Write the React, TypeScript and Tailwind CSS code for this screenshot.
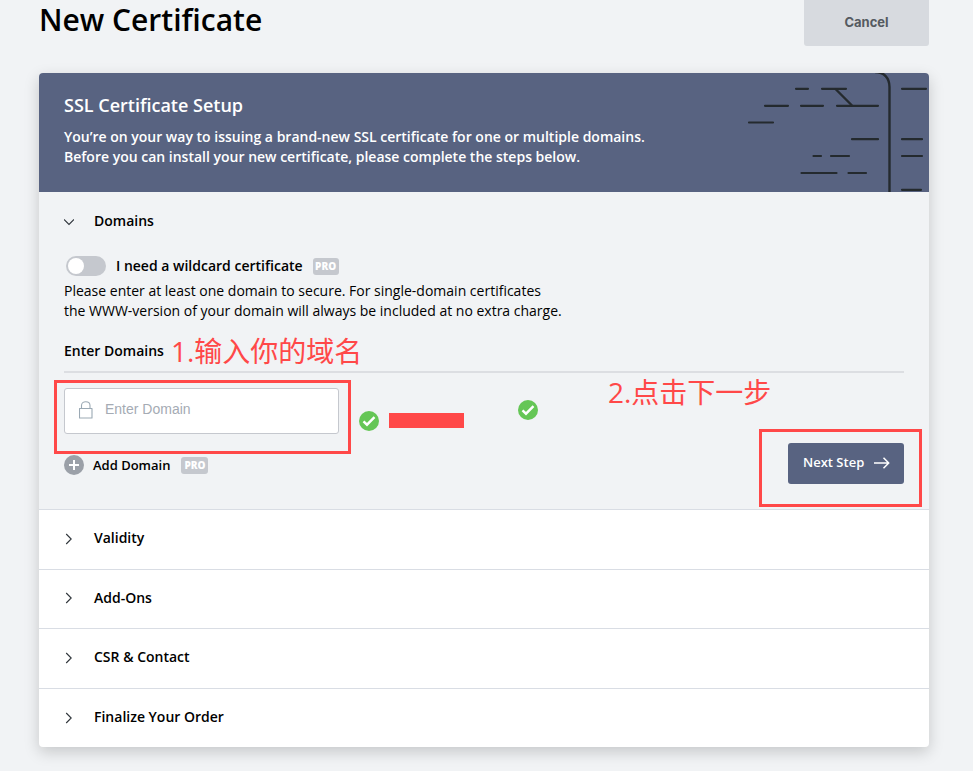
import type { ReactNode } from "react";

const steps = ["Validity", "Add-Ons", "CSR & Contact", "Finalize Your Order"];

function ProBadge({ className = "" }: { className?: string }) {
  return (
    <span className={`flex h-[17px] items-center justify-center rounded-[3px] bg-[#c5c8ce] text-[10px] font-extrabold leading-none text-white ${className}`}>
      PRO
    </span>
  );
}

function Check({ className }: { className: string }) {
  return (
    <svg className={`absolute size-5 ${className}`} viewBox="0 0 20 20" fill="none">
      <circle cx="10" cy="10" r="10" fill="#65c656" />
      <path d="M4.500 10.300 8 13.700 15.500 6.200" stroke="#fff" strokeWidth="2.400" />
    </svg>
  );
}

function Annotation({ className, children }: { className: string; children: ReactNode }) {
  return (
    <span className={`absolute whitespace-nowrap font-['Open_Sans','Noto_Sans_CJK_SC',sans-serif] text-[28px] font-normal leading-8 text-[#ff4848] ${className}`}>
      {children}
    </span>
  );
}

function BannerArt() {
  return (
    <svg className="h-[119px] w-[190px]" viewBox="739 73 190 119" fill="none" stroke="#242a2e" strokeWidth="2.200">
      <path
        strokeLinecap="round"
        d="M796 88.800h12M822 88.800h24M902 88.800h24M765 105.800h23M801 105.800h22M837 105.800h41M749 122.500h24M852 139.200h26M902 139.200h20M813.500 156h7.500M831 156h18M902 156h20M801.500 173h35M848.500 173h17.500M902 189.800h19"
      />
      <path d="M835.500 89 852 105.500M875 72C884 72 889.500 78 889.500 87V192" strokeWidth="2.400" />
    </svg>
  );
}

export default function App() {
  return (
    <div className="relative h-[771px] w-[973px] overflow-hidden bg-[#f1f3f5] px-[39px] font-['Open_Sans',sans-serif] text-black">
      <header className="flex h-[73px] w-[890px] items-start justify-between">
        <h1 className="whitespace-nowrap text-[30px] font-semibold leading-[39px]">New Certificate</h1>
        <button className="h-[46px] w-[125px] rounded-b-[3px] bg-[#d7dadf] font-['Inter',sans-serif] text-[13px] font-bold text-[#555a61]">
          Cancel
        </button>
      </header>

      <main className="h-[674px] w-[890px] overflow-hidden rounded bg-white shadow-[0_5px_15px_rgba(0,0,0,0.18)]">
        <section className="flex h-[119px] justify-between bg-[#586381] pl-[25px] text-white">
          <div className="whitespace-nowrap pt-5">
            <h2 className="text-[18px] font-semibold leading-6">SSL Certificate Setup</h2>
            <p className="mt-[10px] text-[14px] font-semibold leading-5">
              You’re on your way to issuing a brand-new SSL certificate for one or multiple domains.
              <br />
              Before you can install your new certificate, please complete the steps below.
            </p>
          </div>
          <BannerArt />
        </section>

        <section className="h-[318px] border-b border-[#d9dde4] bg-[#f1f3f5] px-[25px] pt-[19px]">
          <div className="flex h-5 items-center">
            <svg className="mt-[2px] h-3 w-[10px]" viewBox="0 0 10 12" fill="none" stroke="#30363c" strokeWidth="1.100">
              <path d="m0 3.500 5 5 5-5" />
            </svg>
            <h3 className="ml-5 text-[14px] font-semibold leading-5">Domains</h3>
          </div>

          <div className="mt-[25px] flex h-5 items-center whitespace-nowrap">
            <span className="ml-[2px] flex h-5 w-10 items-center rounded-full bg-[#c5c8ce] pl-[2px]">
              <span className="size-4 rounded-full bg-white" />
            </span>
            <span className="ml-[10px] text-[14px] font-semibold leading-5">I need a wildcard certificate</span>
            <ProBadge className="ml-[10px] w-[26px]" />
          </div>
          <p className="mt-[5px] whitespace-nowrap text-[14px] leading-5">
            Please enter at least one domain to secure. For single-domain certificates
            <br />
            the WWW-version of your domain will always be included at no extra charge.
          </p>

          <div className="mt-5 h-8 border-b-2 border-[#dcdee2]">
            <h3 className="text-[14px] font-semibold leading-5">Enter Domains</h3>
          </div>

          <div className="mt-[15px] flex justify-between">
            <div>
              <div className="flex h-[46px] w-[275px] items-center rounded-[3px] border border-[#c5c8ce] bg-white">
                <svg className="ml-[14px] mt-[-3px] h-[18px] w-[14px]" viewBox="0 0 14 18" fill="none" stroke="#9ba9b4" strokeLinejoin="round">
                  <path d="M.5 7.500h12.500v9.500H.5zM2.500 7.500V4.500C2.500-.5 11-.5 11 4.500v3" strokeWidth="1.100" />
                </svg>
                <span className="ml-3 mt-[-3px] font-['Liberation_Sans',sans-serif] text-[14px] text-[#a5abb4]">Enter Domain</span>
              </div>
              <div className="mt-[21px] flex h-5 items-center whitespace-nowrap">
                <svg className="size-5" viewBox="0 0 20 20" fill="none">
                  <circle cx="10" cy="10" r="10" fill="#9ba0a8" />
                  <path d="M10 5v10M5 10h10" stroke="#fff" strokeWidth="2" />
                </svg>
                <span className="ml-[9px] pt-[2px] text-[13px] font-semibold">Add Domain</span>
                <ProBadge className="ml-[11px] w-[27px]" />
              </div>
            </div>
            <button className="mt-[55px] flex h-[41px] w-[116px] items-center whitespace-nowrap rounded-[3px] bg-[#586381] pl-[15px] text-[13px] font-semibold text-white">
              <span className="mt-[-2px]">Next Step</span>
              <svg className="ml-[10px] mt-[-2px] h-3 w-4" viewBox="0 0 16 12" fill="none" stroke="white" strokeWidth="1.500">
                <path d="M0 6h15M9.500.8l5.200 5.200-5.200 5.200" />
              </svg>
            </button>
          </div>
        </section>

        {steps.map((step) => (
          <div key={step} className="flex h-[59.500px] items-center border-b border-[#d9dde4] pb-[3px] pl-[25px] last:border-b-0">
            <svg className="mt-[2px] h-3 w-[10px]" viewBox="0 0 10 12" fill="none" stroke="#30363c" strokeWidth="1.100">
              <path d="m2.200 1 5 5-5 5" />
            </svg>
            <span className="ml-5 whitespace-nowrap text-[14px] font-semibold">{step}</span>
          </div>
        ))}
      </main>

      <Annotation className="left-[171px] top-[335px]">1.输入你的域名</Annotation>
      <Annotation className="left-[608px] top-[376px]">2.点击下一步</Annotation>
      <div className="absolute left-[54px] top-[380px] h-[74px] w-[297px] border-[3px] border-[#ff4848]" />
      <div className="absolute left-[759px] top-[429px] h-[78px] w-[163px] border-[3px] border-[#ff4848]" />
      <div className="absolute left-[389px] top-[413px] h-[15px] w-[75px] bg-[#ff4848]" />
      <Check className="left-[359px] top-[411px]" />
      <Check className="left-[518px] top-[400px]" />
    </div>
  );
}
